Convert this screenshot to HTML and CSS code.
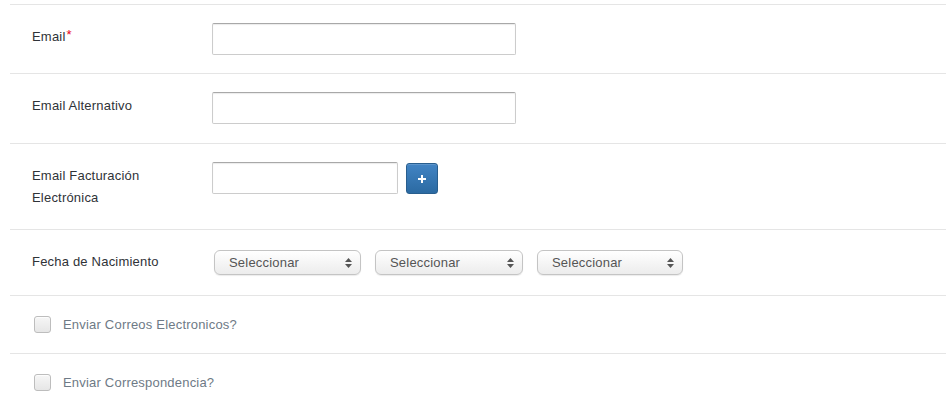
FILE: index.html
```html
<!DOCTYPE html>
<html lang="es">
<head>
<meta charset="utf-8">
<title>Formulario</title>
<link rel="stylesheet" href="styles.css">
</head>
<body>
<div class="form">
  <div class="row">
    <label class="lbl">Email<span class="req">*</span></label>
    <div class="field"><input class="input wide" type="text"></div>
  </div>
  <div class="row row-tall">
    <label class="lbl">Email Alternativo</label>
    <div class="field"><input class="input wide" type="text"></div>
  </div>
  <div class="row">
    <label class="lbl narrow">Email Facturación Electrónica</label>
    <div class="field">
      <input class="input short" type="text">
      <button class="btn-add" type="button" aria-label="Agregar">
        <svg width="8" height="8" viewBox="0 0 8 8"><path d="M3 0h2v3h3v2H5v3H3V5H0V3h3z" fill="#fff"/></svg>
      </button>
    </div>
  </div>
  <div class="row">
    <label class="lbl">Fecha de Nacimiento</label>
    <div class="field selects">
      <div class="select s1"><span>Seleccionar</span><svg class="arrows" width="7" height="10" viewBox="0 0 7 10"><path d="M3.5 0L7 4H0z M3.5 10L0 6h7z" fill="#555"/></svg></div>
      <div class="select s2"><span>Seleccionar</span><svg class="arrows" width="7" height="10" viewBox="0 0 7 10"><path d="M3.5 0L7 4H0z M3.5 10L0 6h7z" fill="#555"/></svg></div>
      <div class="select s3"><span>Seleccionar</span><svg class="arrows" width="7" height="10" viewBox="0 0 7 10"><path d="M3.5 0L7 4H0z M3.5 10L0 6h7z" fill="#555"/></svg></div>
    </div>
  </div>
  <div class="row check-row">
    <span class="check"></span>
    <span class="check-label">Enviar Correos Electronicos?</span>
  </div>
  <div class="row check-row">
    <span class="check"></span>
    <span class="check-label">Enviar Correspondencia?</span>
  </div>
</div>
</body>
</html>
```

FILE: styles.css
```css
* { box-sizing: border-box; }
html, body { margin: 0; padding: 0; background: #fff; }
body {
  font-family: "Liberation Sans", Arial, sans-serif;
  font-size: 13px;
  letter-spacing: 0.2px;
  color: #333;
  overflow: hidden;
}
.form {
  padding: 4px 0 0 10px;
}
.row {
  display: grid;
  grid-template-columns: 202px 1fr;
  border-top: 1px solid #e5e5e5;
  padding: 18px 0 18px 0;
}
.row-tall { padding-bottom: 19px; }
.lbl {
  display: block;
  padding: 3px 20px 2px 22px;
  line-height: 22px;
  color: #2f3338;
}
.lbl.narrow { padding-right: 40px; }
.req { color: #e8001c; font-size: 13px; position: relative; top: -2px; margin-left: 1px; }
.field {
  display: flex;
  align-items: flex-start;
}
.input {
  height: 32px;
  border: 1px solid #ccc;
  border-top-color: #a8a8a8;
  border-radius: 2px;
  box-shadow: inset 0 1px 1px rgba(0,0,0,0.08);
  background: #fff;
  font: inherit;
  padding: 4px 8px;
  margin: 0;
}
.wide { width: 304px; }
.short { width: 186px; }
.btn-add {
  width: 32px;
  height: 31px;
  margin: 1px 0 0 8px;
  padding: 0;
  border: 1px solid #285e8e;
  border-radius: 3px;
  background: linear-gradient(#4284c4, #2b6aa2);
  box-shadow: inset 0 1px 0 rgba(255,255,255,0.15);
  display: flex;
  align-items: center;
  justify-content: center;
}
.selects {
  gap: 14px;
  padding: 2px 0 2px 2px;
}
.select {
  height: 25px;
  width: 148px;
  border: 1px solid #c4c4c4;
  border-radius: 6px;
  background: linear-gradient(#ffffff, #ececec);
  box-shadow: 0 1px 1px rgba(0,0,0,0.08);
  display: flex;
  align-items: center;
  justify-content: space-between;
  padding: 0 8px 0 14px;
  color: #555;
}
.s1 { width: 147px; }
.s3 { width: 146px; }
.arrows { display: block; }
.check-row {
  display: flex;
  align-items: center;
  padding: 18px 0 18px 24px;
  min-height: 58px;
}
.check {
  width: 17px;
  height: 17px;
  border: 1px solid #bdbdbd;
  border-radius: 3px;
  background: linear-gradient(#f6f6f6, #e6e6e6);
  box-shadow: inset 0 1px 1px rgba(255,255,255,0.8);
  flex: none;
}
.check-label {
  margin-left: 12px;
  color: #6e7a86;
  line-height: 21px;
}
```
